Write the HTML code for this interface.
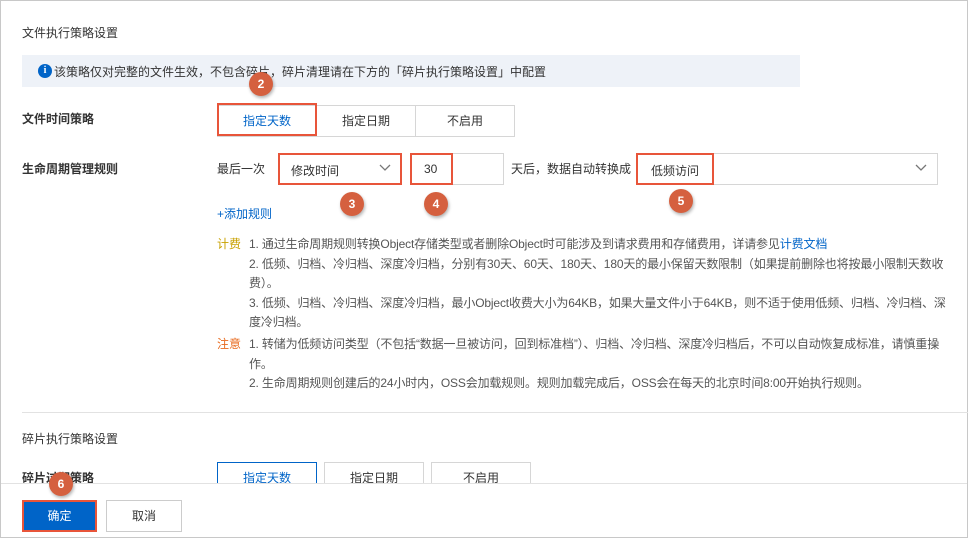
<!DOCTYPE html>
<html><head><meta charset="utf-8"><style>
*{box-sizing:border-box;margin:0;padding:0}
body{width:968px;height:538px;overflow:hidden;background:#fff;font-family:"Liberation Sans","Noto Sans CJK SC",sans-serif;font-size:12px;color:#333;position:relative}
.frame{position:absolute;left:0;top:0;width:968px;height:538px;border:1px solid #c8c8c8}
.a{position:absolute;white-space:nowrap}
.box{position:absolute;border:1px solid #d6d6d6;background:#fff}
.red{position:absolute;border:2px solid #e8553a}
.badge{position:absolute;width:24px;height:24px;border-radius:50%;background:#d5603f;color:#fff;font-weight:bold;font-size:12px;text-align:center;line-height:24px;box-shadow:1px 2px 3px rgba(0,0,0,.3)}
.seg{position:absolute;height:32px;border:1px solid #d6d6d6;text-align:center;line-height:30px;background:#fff}
.note{position:absolute;left:249px;font-size:12px;color:#555;line-height:19.5px;width:708px;letter-spacing:-0.15px}
</style></head><body>
<div class="frame"></div>
<div class="a" style="left:22px;top:24px">文件执行策略设置</div>
<div class="a" style="left:22px;top:55px;width:778px;height:32px;background:#eef2f8"></div>
<div class="a" style="left:38px;top:64px;width:14px;height:14px;border-radius:50%;background:#0064c8;color:#fff;font-size:10px;font-weight:bold;text-align:center;line-height:14px;font-family:'Liberation Serif',serif">i</div>
<div class="a" style="left:54px;top:63px">该策略仅对完整的文件生效，不包含碎片，碎片清理请在下方的「碎片执行策略设置」中配置</div>

<div class="a" style="left:22px;top:110px;font-weight:bold">文件时间策略</div>
<div class="seg" style="left:217px;top:105px;width:100px;color:#0064c8">指定天数</div>
<div class="seg" style="left:316px;top:105px;width:100px">指定日期</div>
<div class="seg" style="left:415px;top:105px;width:100px">不启用</div>
<div class="red" style="left:217px;top:103px;width:100px;height:33px"></div>
<div class="badge" style="left:249px;top:72px">2</div>

<div class="a" style="left:22px;top:160px;font-weight:bold">生命周期管理规则</div>
<div class="a" style="left:217px;top:160px">最后一次</div>
<div class="box" style="left:278px;top:153px;width:123px;height:32px"></div>
<div class="a" style="left:291px;top:162px">修改时间</div>
<svg class="a" style="left:379px;top:164px" width="12" height="8"><path d="M1 1L6 6L11 1" fill="none" stroke="#777" stroke-width="1.3"/></svg>
<div class="red" style="left:278px;top:153px;width:124px;height:32px"></div>
<div class="box" style="left:410px;top:153px;width:94px;height:32px"></div>
<div class="a" style="left:424px;top:162px">30</div>
<div class="red" style="left:410px;top:153px;width:43px;height:32px"></div>
<div class="a" style="left:511px;top:160px">天后，数据自动转换成</div>
<div class="box" style="left:636px;top:153px;width:302px;height:32px"></div>
<div class="a" style="left:651px;top:162px">低频访问</div>
<svg class="a" style="left:915px;top:164px" width="12" height="8"><path d="M1 1L6 6L11 1" fill="none" stroke="#777" stroke-width="1.3"/></svg>
<div class="red" style="left:636px;top:153px;width:78px;height:32px"></div>
<div class="badge" style="left:340px;top:192px">3</div>
<div class="badge" style="left:424px;top:192px">4</div>
<div class="badge" style="left:669px;top:189px">5</div>
<div class="a" style="left:217px;top:205px;color:#0064c8">+添加规则</div>

<div class="a" style="left:217px;top:235px;color:#c8a100">计费</div>
<div class="note" style="top:235px">1. 通过生命周期规则转换Object存储类型或者删除Object时可能涉及到请求费用和存储费用，详请参见<span style="color:#0064c8">计费文档</span><br>2. 低频、归档、冷归档、深度冷归档，分别有30天、60天、180天、180天的最小保留天数限制（如果提前删除也将按最小限制天数收费）。<br>3. 低频、归档、冷归档、深度冷归档，最小Object收费大小为64KB，如果大量文件小于64KB，则不适于使用低频、归档、冷归档、深度冷归档。</div>
<div class="a" style="left:217px;top:335px;color:#e86a1e">注意</div>
<div class="note" style="top:335px">1. 转储为低频访问类型（不包括“数据一旦被访问，回到标准档”）、归档、冷归档、深度冷归档后，不可以自动恢复成标准，请慎重操作。<br>2. 生命周期规则创建后的24小时内，OSS会加载规则。规则加载完成后，OSS会在每天的北京时间8:00开始执行规则。</div>

<div class="a" style="left:22px;top:412px;width:946px;height:1px;background:#e2e2e2"></div>
<div class="a" style="left:22px;top:430px">碎片执行策略设置</div>
<div class="a" style="left:22px;top:469px;font-weight:bold">碎片过期策略</div>
<div class="seg" style="left:217px;top:462px;width:100px;color:#0064c8;border-color:#0064c8">指定天数</div>
<div class="seg" style="left:324px;top:462px;width:100px">指定日期</div>
<div class="seg" style="left:431px;top:462px;width:100px">不启用</div>

<div class="a" style="left:1px;top:483px;width:966px;height:54px;background:#fff;border-top:1px solid #e2e2e2"></div>
<div class="a" style="left:22px;top:500px;width:75px;height:32px;background:#0064c8;border:2px solid #e8553a;color:#fff;text-align:center;line-height:28px">确定</div>
<div class="a" style="left:106px;top:500px;width:76px;height:32px;border:1px solid #ccc;text-align:center;line-height:30px">取消</div>
<div class="badge" style="left:49px;top:472px">6</div>
</body></html>
